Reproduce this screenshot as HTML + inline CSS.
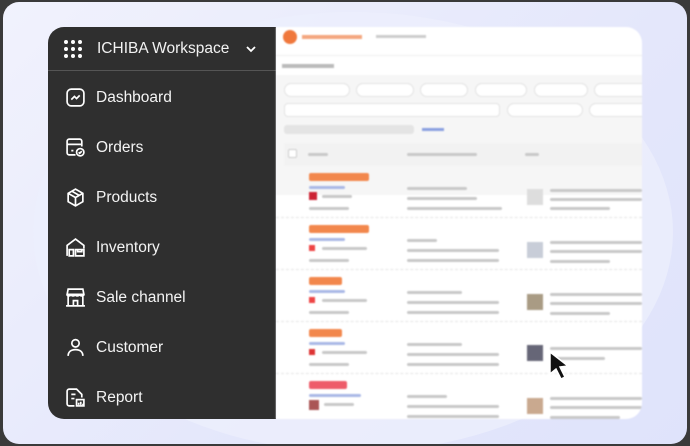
<!DOCTYPE html>
<html><head><meta charset="utf-8"><style>
*{box-sizing:border-box;margin:0;padding:0}
body{width:690px;height:446px;background:#3a3a3a;font-family:"Liberation Sans","Noto Sans CJK JP",sans-serif;overflow:hidden;position:relative}
.card{position:absolute;left:3px;top:2px;width:684px;height:442px;border-radius:16px;background:linear-gradient(135deg,#f1f2fd,#e4e7fb 60%,#dfe3fb);overflow:hidden}
.blob{position:absolute;left:30px;top:10px;width:640px;height:440px;border-radius:50%;background:#eceffd;opacity:.8}
.side{position:absolute;left:48px;top:27px;width:228px;height:392px;background:#2f2f2f;border-radius:16px 0 0 16px;color:#fff}
.hdr{height:44px;border-bottom:1px solid #555;display:flex;align-items:center;padding-left:15px}
.hdr .t{font-size:15.5px;margin-left:14px;color:#f2f2f2}
.item{position:absolute;left:17px;display:flex;align-items:center;font-size:15.5px;color:#f4f4f4}
.item svg{width:21px;height:21px;margin-right:10px}
.main{position:absolute;left:276px;top:27px;width:366px;height:392px;background:#fff;border-radius:0 16px 16px 0;overflow:hidden;filter:blur(0.7px)}
.row{position:absolute;left:0;width:366px;border-bottom:1px dashed #e4e4e4}
.tag{position:absolute;left:33px;width:60px;height:8px;border-radius:2px;background:#f2874c}
.ln{position:absolute;height:3px;background:#c8c8c8;border-radius:2px}
.chip{position:absolute;height:14px;border:1px solid #e2e2e2;border-radius:7px;background:#fff}
</style></head><body>
<div class="card"><div class="blob"></div></div>
<div class="side">
 <div class="hdr">
  <svg width="20" height="20" viewBox="0 0 20 20" fill="#fff"><circle cx="3" cy="3" r="2"/><circle cx="10" cy="3" r="2"/><circle cx="17" cy="3" r="2"/><circle cx="3" cy="10" r="2"/><circle cx="10" cy="10" r="2"/><circle cx="17" cy="10" r="2"/><circle cx="3" cy="17" r="2"/><circle cx="10" cy="17" r="2"/><circle cx="17" cy="17" r="2"/></svg>
  <span class="t">ICHIBA Workspace</span>
  <svg style="margin-left:16px" width="12" height="8" viewBox="0 0 12 8"><path d="M2 2l4 4 4-4" stroke="#fff" stroke-width="1.8" fill="none"/></svg>
 </div>
 <div class="item" style="top:60px"><svg viewBox="0 0 20 20" fill="none" stroke="#fff" stroke-width="1.6"><rect x="2" y="2" width="16" height="16" rx="4"/><path d="M6 12l3-3 2 2 3-3"/></svg>Dashboard</div>
 <div class="item" style="top:110px"><svg viewBox="0 0 20 20" fill="none" stroke="#fff" stroke-width="1.6"><path d="M10 17H4a2 2 0 0 1-2-2V4a2 2 0 0 1 2-2h10a2 2 0 0 1 2 2v5M2 7h14M6 13h2"/><circle cx="14.5" cy="14.5" r="3.5"/><path d="M13 14.5l1 1 2-2"/></svg>Orders</div>
 <div class="item" style="top:160px"><svg viewBox="0 0 20 20" fill="none" stroke="#fff" stroke-width="1.6"><path d="M10 2l7 4v8l-7 4-7-4V6z M3 6l7 4 7-4M10 10v8M6.5 4l7 4"/></svg>Products</div>
 <div class="item" style="top:210px"><svg viewBox="0 0 20 20" fill="none" stroke="#fff" stroke-width="1.6"><path d="M2 18V8l8-6 8 6v3M4 18h4v-6H4zM10 12h8v6h-8zM12 12v2h4v-2"/></svg>Inventory</div>
 <div class="item" style="top:260px"><svg viewBox="0 0 20 20" fill="none" stroke="#fff" stroke-width="1.6"><path d="M3 2h14l1 5H2zM2 7c0 2 3 2 4 0 0 2 3 2 4 0 0 2 3 2 4 0 0 2 4 2 4 0M3 9v9h14V9M8 18v-5h4v5M1 18h18"/></svg>Sale channel</div>
 <div class="item" style="top:310px"><svg viewBox="0 0 20 20" fill="none" stroke="#fff" stroke-width="1.6"><circle cx="10" cy="6" r="3.5"/><path d="M3 18c0-4 3-6 7-6s7 2 7 6"/></svg>Customer</div>
 <div class="item" style="top:360px"><svg viewBox="0 0 20 20" fill="none" stroke="#fff" stroke-width="1.6"><path d="M9 18H4a2 2 0 0 1-2-2V4a2 2 0 0 1 2-2h7l5 5v3M6 7h4M6 11h3"/><rect x="11" y="12" width="7" height="6"/><path d="M13 17v-2M15 17v-3M17 17v-1"/></svg>Report</div>
</div>
<div class="main">
 <div style="position:absolute;left:7px;top:3px;width:14px;height:14px;border-radius:50%;background:#f0783c"></div>
 <div style="position:absolute;left:26px;top:8px;width:60px;height:4px;background:#f4a77f"></div>
 <div style="position:absolute;left:100px;top:8px;width:50px;height:3px;background:#ccc"></div>
 <div style="position:absolute;left:0;top:28px;width:366px;border-top:1px solid #eee"></div>
 <div style="position:absolute;left:6px;top:37px;width:52px;height:4px;background:#bbb"></div>
 <div style="position:absolute;left:0;top:48px;width:366px;height:120px;background:#f6f6f6"></div>
 <div class="chip" style="left:8px;top:56px;width:66px"></div><div class="chip" style="left:80px;top:56px;width:58px"></div><div class="chip" style="left:144px;top:56px;width:48px"></div><div class="chip" style="left:199px;top:56px;width:52px"></div><div class="chip" style="left:258px;top:56px;width:54px"></div><div class="chip" style="left:318px;top:56px;width:60px"></div>
 <div class="chip" style="left:8px;top:76px;width:216px;border-radius:4px"></div><div class="chip" style="left:231px;top:76px;width:76px"></div><div class="chip" style="left:313px;top:76px;width:60px"></div>
 <div style="position:absolute;left:8px;top:98px;width:130px;height:9px;border-radius:3px;background:#e4e4e4"></div>
 <div style="position:absolute;left:146px;top:101px;width:22px;height:3px;background:#8aa0e0"></div>
 <div style="position:absolute;left:8px;top:116px;width:358px;height:23px;background:#f2f2f2"></div>
 <div style="position:absolute;left:12px;top:122px;width:9px;height:9px;border:1px solid #ccc;background:#fff;border-radius:2px"></div>
 <div class="ln" style="left:32px;top:126px;width:20px"></div><div class="ln" style="left:131px;top:126px;width:70px"></div><div class="ln" style="left:249px;top:126px;width:14px"></div>
 <div class="row" style="top:139px;height:52px"></div><div class="row" style="top:191px;height:52px"></div><div class="row" style="top:243px;height:52px"></div><div class="row" style="top:295px;height:52px"></div><div class="row" style="top:347px;height:52px"></div>
 <div style="position:absolute;left:0;top:0;width:366px;height:392px">
  <div class="tag" style="top:146px"></div><div class="tag" style="top:198px"></div><div class="tag" style="top:250px;width:33px"></div><div class="tag" style="top:302px;width:33px"></div><div class="tag" style="top:354px;background:#ee5c6a;width:38px"></div>
 </div>
 <div style="position:absolute;left:0;top:0">
  <div class="ln" style="left:33px;top:159px;width:36px;background:#a9b8e6"></div><div class="ln" style="left:33px;top:211px;width:36px;background:#a9b8e6"></div><div class="ln" style="left:33px;top:263px;width:36px;background:#a9b8e6"></div><div class="ln" style="left:33px;top:315px;width:36px;background:#a9b8e6"></div><div class="ln" style="left:33px;top:367px;width:52px;background:#a9b8e6"></div>
  <div style="position:absolute;left:33px;top:165px;width:8px;height:8px;background:#c23"></div><div class="ln" style="left:46px;top:168px;width:30px"></div><div class="ln" style="left:33px;top:180px;width:40px"></div>
  <div style="position:absolute;left:33px;top:218px;width:6px;height:6px;background:#e44"></div><div class="ln" style="left:46px;top:220px;width:45px"></div><div class="ln" style="left:33px;top:232px;width:40px"></div>
  <div style="position:absolute;left:33px;top:270px;width:6px;height:6px;background:#e44"></div><div class="ln" style="left:46px;top:272px;width:45px"></div><div class="ln" style="left:33px;top:284px;width:40px"></div>
  <div style="position:absolute;left:33px;top:322px;width:6px;height:6px;background:#d33"></div><div class="ln" style="left:46px;top:324px;width:45px"></div><div class="ln" style="left:33px;top:336px;width:40px"></div>
  <div style="position:absolute;left:33px;top:373px;width:10px;height:10px;background:#a55"></div><div class="ln" style="left:48px;top:376px;width:30px"></div>
 </div>
 <div style="position:absolute;left:0;top:0">
  <div class="ln" style="left:131px;top:160px;width:60px"></div><div class="ln" style="left:131px;top:170px;width:70px"></div><div class="ln" style="left:131px;top:180px;width:95px"></div>
  <div class="ln" style="left:131px;top:212px;width:30px"></div><div class="ln" style="left:131px;top:222px;width:92px"></div><div class="ln" style="left:131px;top:232px;width:92px"></div>
  <div class="ln" style="left:131px;top:264px;width:55px"></div><div class="ln" style="left:131px;top:274px;width:92px"></div><div class="ln" style="left:131px;top:284px;width:92px"></div>
  <div class="ln" style="left:131px;top:316px;width:55px"></div><div class="ln" style="left:131px;top:326px;width:92px"></div><div class="ln" style="left:131px;top:336px;width:92px"></div>
  <div class="ln" style="left:131px;top:368px;width:40px"></div><div class="ln" style="left:131px;top:378px;width:92px"></div><div class="ln" style="left:131px;top:388px;width:92px"></div>
 </div>
 <div style="position:absolute;left:0;top:0">
  <div style="position:absolute;left:251px;top:162px;width:16px;height:16px;background:#ddd"></div><div class="ln" style="left:274px;top:162px;width:92px"></div><div class="ln" style="left:274px;top:171px;width:92px"></div><div class="ln" style="left:274px;top:180px;width:60px"></div>
  <div style="position:absolute;left:251px;top:215px;width:16px;height:16px;background:#c8cdd8"></div><div class="ln" style="left:274px;top:214px;width:92px"></div><div class="ln" style="left:274px;top:223px;width:92px"></div><div class="ln" style="left:274px;top:233px;width:60px"></div>
  <div style="position:absolute;left:251px;top:267px;width:16px;height:16px;background:#a99b84"></div><div class="ln" style="left:274px;top:266px;width:92px"></div><div class="ln" style="left:274px;top:275px;width:92px"></div><div class="ln" style="left:274px;top:285px;width:60px"></div>
  <div style="position:absolute;left:251px;top:318px;width:16px;height:16px;background:#667"></div><div class="ln" style="left:274px;top:320px;width:92px"></div><div class="ln" style="left:274px;top:330px;width:55px"></div>
  <div style="position:absolute;left:251px;top:371px;width:16px;height:16px;background:#c9a98f"></div><div class="ln" style="left:274px;top:370px;width:92px"></div><div class="ln" style="left:274px;top:379px;width:92px"></div><div class="ln" style="left:274px;top:389px;width:70px"></div>
 </div>
</div>
<svg style="position:absolute;left:547px;top:350px" width="28" height="32" viewBox="0 0 28 32"><path d="M3 2l0 22 6-5 5 10 4-2-5-10 8-1z" fill="#111" stroke="#fff" stroke-width="1.5"/></svg>
</body></html>
